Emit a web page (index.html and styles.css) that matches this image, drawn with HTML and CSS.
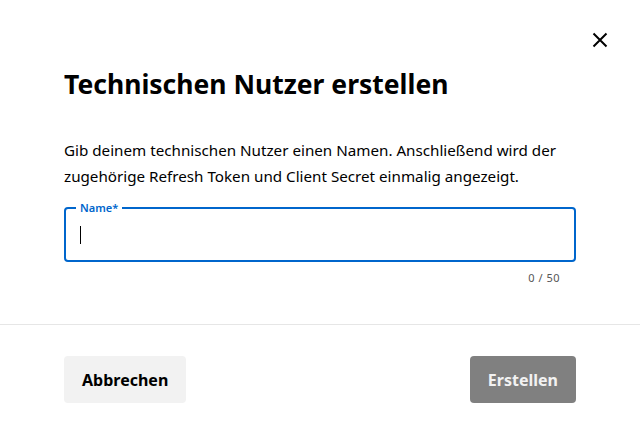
FILE: index.html
```html
<!DOCTYPE html>
<html lang="de">
<head>
  <meta charset="UTF-8">
  <title>Technischen Nutzer erstellen</title>
  <meta name="viewport" content="width=device-width, initial-scale=1">
  <link rel="stylesheet" href="styles.css">
</head>
<body>

<div class="dialog">
  <div class="kopf">
    <button class="schliessen" aria-label="Schließen">
      <svg width="24" height="24" viewBox="0 0 24 24">
        <path d="M5.5 5.5 L18.5 18.5 M18.5 5.5 L5.5 18.5" stroke="#000" stroke-width="2" fill="none"/>
      </svg>
    </button>
  </div>

  <div class="inhalt">
    <h1>Technischen Nutzer erstellen</h1>
    <p>Gib deinem technischen Nutzer einen Namen. Anschließend wird der zugehörige Refresh Token und Client Secret einmalig angezeigt.</p>

    <div class="feld">
      <span class="label">Name*</span>
      <span class="cursor"></span>
    </div>
    <div class="zaehler">0 / 50</div>
  </div>

  <div class="aktionen">
    <button class="btn-abbrechen">Abbrechen</button>
    <button class="btn-erstellen">Erstellen</button>
  </div>
</div>

</body>
</html>
```

FILE: styles.css
```css
* {
  box-sizing: border-box;
}

body {
  margin: 0;
  font-family: 'Noto Sans', sans-serif;
  background: #fff;
  color: #000;
}

.dialog {
  width: 640px;
  height: 432px;
  background: #fff;
}

.kopf {
  display: flex;
  justify-content: flex-end;
  padding: 28px 28px 0 0;
}

.schliessen {
  width: 24px;
  height: 24px;
  padding: 0;
  border: none;
  background: none;
  cursor: pointer;
}

.schliessen svg {
  display: block;
}

.inhalt {
  padding: 0 64px;
}

h1 {
  margin: 14px 0 0;
  font-size: 26.5px;
  line-height: 36px;
  font-weight: 700;
}

p {
  margin: 35px 0 0;
  font-size: 15.2px;
  line-height: 26px;
}

.feld {
  position: relative;
  margin-top: 18px;
  height: 55px;
  border: 2px solid #0066cc;
  border-radius: 4px;
  padding: 17px 14px;
}

.label {
  position: absolute;
  top: -9px;
  left: 10px;
  padding: 0 4px;
  background: #fff;
  color: #0066cc;
  font-size: 11px;
  line-height: 16px;
  font-weight: 600;
}

.cursor {
  display: block;
  width: 1px;
  height: 18px;
  background: #000;
}

.zaehler {
  text-align: right;
  padding-right: 16px;
  margin-top: 8px;
  font-size: 11px;
  line-height: 16px;
  color: #555;
  letter-spacing: 0.5px;
}

.aktionen {
  display: flex;
  justify-content: space-between;
  margin-top: 38px;
  padding: 31px 64px;
  border-top: 1px solid #e6e6e6;
}

.aktionen button {
  height: 47px;
  padding: 0 18px;
  border: none;
  border-radius: 4px;
  font-family: inherit;
  font-size: 16px;
  font-weight: 700;
  cursor: pointer;
}

.btn-abbrechen {
  background: #f2f2f2;
  color: #000;
}

.btn-erstellen {
  background: #808080;
  color: #f2f2f2;
}
```
